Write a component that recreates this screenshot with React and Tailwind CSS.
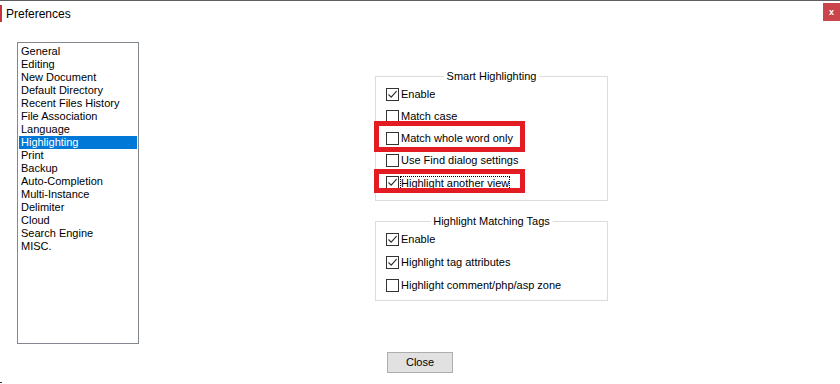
import React from "react";

const items = [
  "General",
  "Editing",
  "New Document",
  "Default Directory",
  "Recent Files History",
  "File Association",
  "Language",
  "Highlighting",
  "Print",
  "Backup",
  "Auto-Completion",
  "Multi-Instance",
  "Delimiter",
  "Cloud",
  "Search Engine",
  "MISC.",
];

function Check({ checked }) {
  return (
    <div className="w-[13px] h-[13px] border border-[#333333] bg-white flex items-center justify-center shrink-0">
      {checked && (
        <svg width="11" height="11" viewBox="0 0 11 11">
          <path d="M1.5 5.5 L4.2 8.2 L9.6 2.2" fill="none" stroke="#333333" strokeWidth="1.2" />
        </svg>
      )}
    </div>
  );
}

function Row({ checked, label, children, focus }) {
  return (
    <div className="relative flex items-center h-[13px] gap-[2px]">
      <Check checked={checked} />
      <span className={focus ? "leading-[12px] outline outline-1 outline-dotted outline-black" : "leading-[13px]"}>
        {label}
      </span>
      {children}
    </div>
  );
}

export default function App() {
  return (
    <div className="w-[840px] h-[384px] bg-white border-t border-[#5f5f5f] relative overflow-hidden font-['Liberation_Sans',Arial,sans-serif] text-[11px] text-black">
      <div className="flex items-center h-[25px]">
        <div className="w-[2px] h-[17px] bg-[#c8323c]" />
        <span className="ml-[4px] text-[12px] leading-[14px]">Preferences</span>
      </div>
      <div className="absolute top-[2px] right-0 w-[17px] h-[18px] bg-[#c9454b] flex items-center justify-center text-white text-[9px] font-bold leading-none">
        x
      </div>

      <div className="flex pt-[16px]">
        <div className="ml-[17px] w-[122px] h-[302px] border border-[#828790] px-[1px] pt-[2px]">
          {items.map((it) => (
            <div
              key={it}
              className={
                "h-[13px] leading-[13px] pl-[2px] whitespace-nowrap " +
                (it === "Highlighting" ? "bg-[#0078d7] text-white" : "")
              }
            >
              {it}
            </div>
          ))}
        </div>

        <div className="ml-[236px] flex flex-col">
          <div className="relative mt-[34px] w-[233px] h-[125px] border border-[#dcdcdc] pt-[11px] pl-[10px] flex flex-col gap-[9px]">
            <span className="absolute left-1/2 -translate-x-1/2 top-[-7px] bg-white px-[3px] leading-[13px] whitespace-nowrap">
              Smart Highlighting
            </span>
            <Row checked label="Enable" />
            <Row label="Match case" />
            <Row label="Match whole word only">
              <div className="absolute left-[-12px] top-[-11px] w-[151px] h-[31px] border-[5px] border-[#e31b23]" />
            </Row>
            <Row label="Use Find dialog settings" />
            <Row checked label="Highlight another view" focus>
              <div className="absolute left-[-12px] top-[-7px] w-[151px] h-[24px] border-[5px] border-[#e31b23]" />
            </Row>
          </div>

          <div className="relative mt-[20px] w-[233px] h-[80px] border border-[#dcdcdc] pt-[11px] pl-[10px] flex flex-col gap-[10px]">
            <span className="absolute left-1/2 -translate-x-1/2 top-[-7px] bg-white px-[3px] leading-[13px] whitespace-nowrap">
              Highlight Matching Tags
            </span>
            <Row checked label="Enable" />
            <Row checked label="Highlight tag attributes" />
            <Row label="Highlight comment/php/asp zone" />
          </div>
        </div>
      </div>

      <div className="flex justify-center mt-[8px]">
        <div className="w-[66px] h-[21px] bg-[#e1e1e1] border border-[#adadad] flex items-center justify-center leading-none">
          Close
        </div>
      </div>

      <div className="absolute left-0 bottom-[1px] w-[2px] h-[1px] bg-[#333333]" />
    </div>
  );
}
